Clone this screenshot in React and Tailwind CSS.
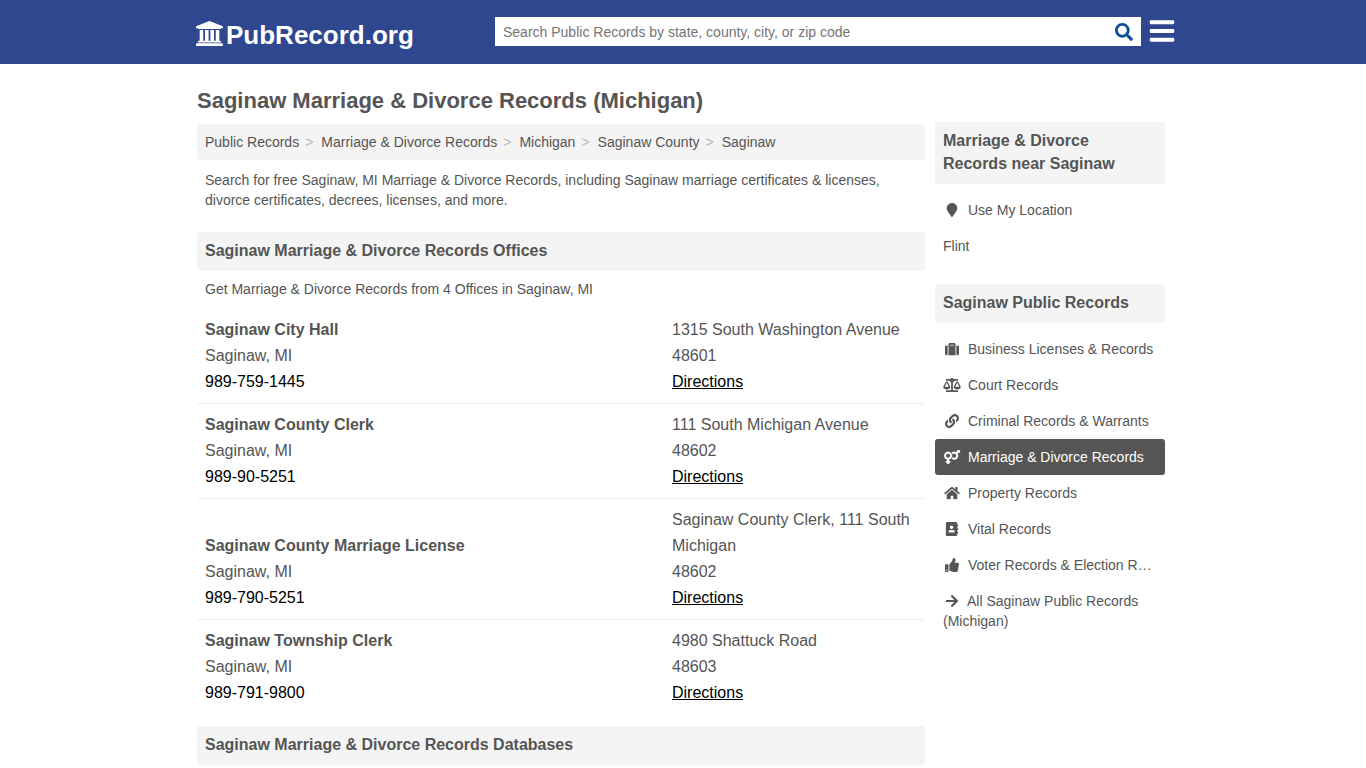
import {
  FaAddressBook,
  FaArrowRight,
  FaBalanceScale,
  FaBars,
  FaHome,
  FaLink,
  FaMapMarker,
  FaSearch,
  FaSuitcase,
  FaThumbsUp,
  FaVenusMars,
} from "react-icons/fa";

const crumbs = ["Public Records", "Marriage & Divorce Records", "Michigan", "Saginaw County", "Saginaw"];

const offices = [
  { name: "Saginaw City Hall", phone: "989-759-1445", street: "1315 South Washington Avenue", zip: "48601" },
  { name: "Saginaw County Clerk", phone: "989-90-5251", street: "111 South Michigan Avenue", zip: "48602" },
  { name: "Saginaw County Marriage License", phone: "989-790-5251", street: "Saginaw County Clerk, 111 South Michigan", zip: "48602" },
  { name: "Saginaw Township Clerk", phone: "989-791-9800", street: "4980 Shattuck Road", zip: "48603" },
];

const categories = [
  { label: "Business Licenses & Records", icon: FaSuitcase },
  { label: "Court Records", icon: FaBalanceScale },
  { label: "Criminal Records & Warrants", icon: FaLink },
  { label: "Marriage & Divorce Records", icon: FaVenusMars, active: true },
  { label: "Property Records", icon: FaHome },
  { label: "Vital Records", icon: FaAddressBook },
  { label: "Voter Records & Election Records", icon: FaThumbsUp },
];

function LogoIcon() {
  return (
    <svg viewBox="0 0 1920 1792" fill="currentColor" aria-hidden="true" className="mb-[3px] h-[25px] w-[27px]">
      <path d="M960 0l960 384v128h-128q0 26-20.5 45t-48.5 19h-1526q-28 0-48.5-19t-20.5-45h-128v-128zM256 640h256v768h128v-768h256v768h128v-768h256v768h128v-768h256v768h59q28 0 48.5 19t20.5 45v64h-1664v-64q0-26 20.5-45t48.5-19h59v-768zM1851 1600q28 0 48.5 19t20.5 45v128h-1920v-128q0-26 20.5-45t48.5-19h1782z" />
    </svg>
  );
}

function SectionHeading({ children }) {
  return (
    <h2 className="rounded-[3px] bg-[#f4f4f4] px-2 pt-[7px] pb-[9px] text-base leading-[23px] font-bold">{children}</h2>
  );
}

function SideLink({ icon: Icon, label, active }) {
  return (
    <a
      href="#"
      className={
        active
          ? "flex items-center rounded-[3px] bg-[#555] p-2 text-white"
          : "flex items-center rounded-[3px] p-2"
      }
    >
      {Icon && (
        <Icon
          className={
            active
              ? "mr-[7px] h-[14px] w-[18px] shrink-0 stroke-current stroke-[10px]"
              : "mr-[7px] h-[14px] w-[18px] shrink-0"
          }
        />
      )}
      <span className="truncate">{label}</span>
    </a>
  );
}

export default function App() {
  return (
    <div className="min-h-screen bg-white font-['Liberation_Sans',Arial,sans-serif] text-sm leading-5 text-[#555]">
      <header className="bg-[#2f478f]">
        <div className="mx-auto flex h-16 max-w-[988px] items-center pr-px pb-px pl-[6px]">
          <a href="#" className="flex w-[300px] shrink-0 items-center gap-[3px] pt-[6px] pl-px text-[26px] leading-8 font-bold text-white">
            <LogoIcon />
            PubRecord.org
          </a>
          <form className="flex h-[29px] min-w-0 flex-1 items-center bg-white" onSubmit={(e) => e.preventDefault()}>
            <input
              type="search"
              aria-label="Search public records"
              placeholder="Search Public Records by state, county, city, or zip code"
              className="h-full min-w-0 flex-1 px-2 text-sm text-[#555] outline-none placeholder:text-[#757575]"
            />
            <button type="submit" aria-label="Search" className="px-2 text-[#0b4f9e]">
              <FaSearch className="size-[18px]" />
            </button>
          </form>
          <button type="button" aria-label="Menu" className="ml-[7px] pb-0.5 text-white">
            <FaBars className="size-[28px]" />
          </button>
        </div>
      </header>

      <div className="mx-auto flex max-w-[988px] gap-[10px] pt-5 pr-3 pl-2">
        <main className="min-w-0 flex-1 pb-8">
          <h1 className="pt-px pb-[7px] text-[22px] leading-8 font-bold">Saginaw Marriage &amp; Divorce Records (Michigan)</h1>
          <nav aria-label="Breadcrumb" className="rounded-[3px] bg-[#f4f4f4] p-2">
            <ol className="flex">
              {crumbs.map((crumb, i) => (
                <li key={crumb} className="flex">
                  <a href="#">{crumb}</a>
                  {i < crumbs.length - 1 && <span className="pr-2 pl-[6px] text-[#bbb]">&gt;</span>}
                </li>
              ))}
            </ol>
          </nav>
          <p className="px-2 pt-[10px] pb-[22px]">
            Search for free Saginaw, MI Marriage &amp; Divorce Records, including Saginaw marriage certificates &amp;
            licenses, divorce certificates, decrees, licenses, and more.
          </p>

          <SectionHeading>Saginaw Marriage &amp; Divorce Records Offices</SectionHeading>
          <p className="p-2">Get Marriage &amp; Divorce Records from 4 Offices in Saginaw, MI</p>
          <ul className="mb-3 divide-y divide-[#eee] pt-0.5 text-base leading-[26px]">
            {offices.map((office) => (
              <li key={office.name} className="flex items-end p-2">
                <div className="min-w-0 flex-1">
                  <h3 className="font-bold">{office.name}</h3>
                  <p>Saginaw, MI</p>
                  <a href="#" className="text-black">{office.phone}</a>
                </div>
                <div className="w-[245px] shrink-0">
                  <p>{office.street}</p>
                  <p>{office.zip}</p>
                  <a href="#" className="text-black underline">Directions</a>
                </div>
              </li>
            ))}
          </ul>

          <SectionHeading>Saginaw Marriage &amp; Divorce Records Databases</SectionHeading>
        </main>

        <aside className="w-[230px] shrink-0 pt-[38px]">
          <SectionHeading>Marriage &amp; Divorce Records near Saginaw</SectionHeading>
          <nav aria-label="Nearby" className="pt-2 pb-5">
            <SideLink icon={FaMapMarker} label="Use My Location" />
            <SideLink label="Flint" />
          </nav>
          <SectionHeading>Saginaw Public Records</SectionHeading>
          <nav aria-label="Record types" className="pt-2">
            {categories.map((item) => (
              <SideLink key={item.label} {...item} />
            ))}
            <a href="#" className="block p-2">
              <FaArrowRight className="mr-[6px] inline h-[14px] w-[18px] align-[-2px]" />
              All Saginaw Public Records (Michigan)
            </a>
          </nav>
        </aside>
      </div>
    </div>
  );
}
